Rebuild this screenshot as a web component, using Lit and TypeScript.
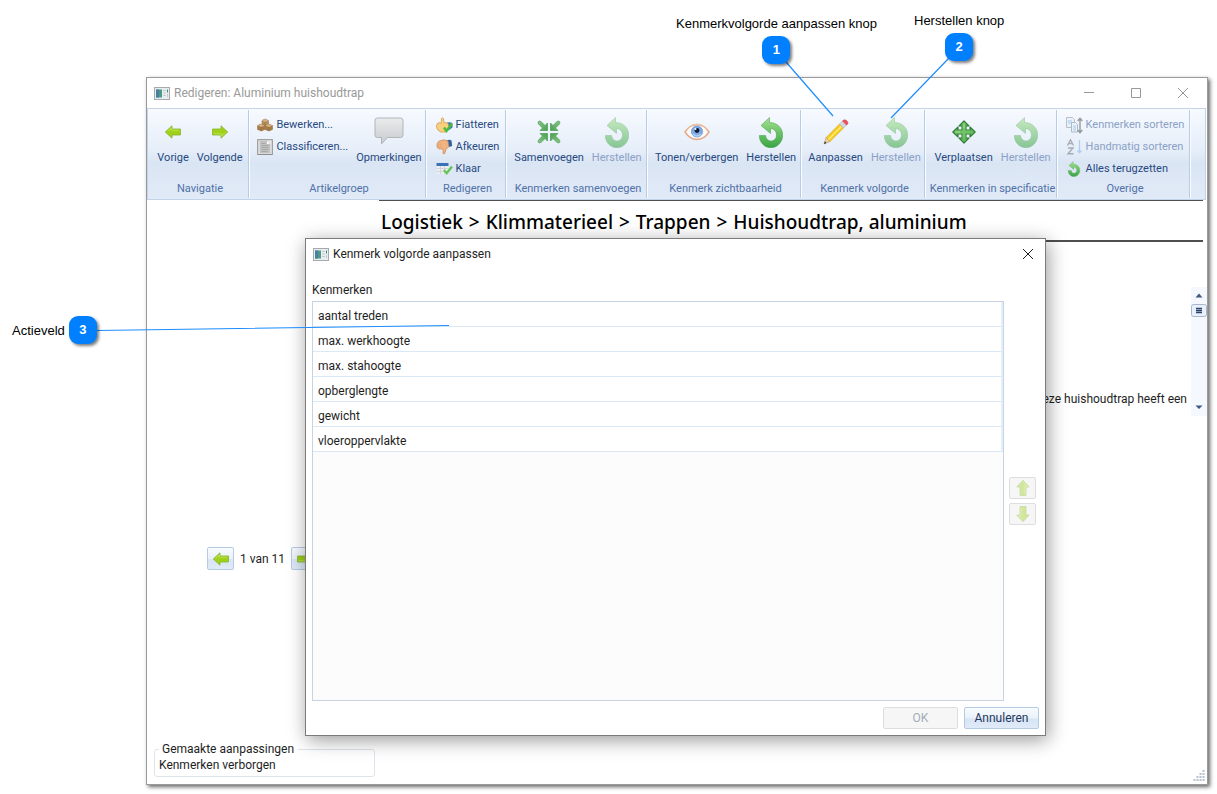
import { LitElement, html, svg, css, nothing, TemplateResult } from "lit";
import { customElement, property, state } from "lit/decorators.js";

const undoShape = svg`<path fill="url(#undo)" stroke="#3f9a45" stroke-width=".5"
  d="M10.500 .500 2 8.500l9.500 8V11.500C15 11.500 17.500 14.500 17.500 18S15 24 12 24 7 21.500 6.500 18.500H.300C.300 25.500 5.500 30.700 12 30.700S23.700 25 23.700 18 18 5.500 10.500 5.500Z"/>`;

const undoDefs = svg`<defs><linearGradient id="undo" x1="0" y1="0" x2="0" y2="1">
  <stop offset="0" stop-color="#a5e08f"/><stop offset=".5" stop-color="#6cc368"/><stop offset="1" stop-color="#3ba446"/>
</linearGradient></defs>`;

const arrow = (angle: number) => svg`<g transform="rotate(${angle} 8 8)">
  <path d="M.3 8 7 1.800V5h8.500v6H7v3.200z" fill="#9fd01a" stroke="#86b52c" stroke-width=".8" stroke-linejoin="round"/>
  <path d="M2.500 7.500 6.300 4V6.200h8" fill="none" stroke="#c3e860" stroke-width=".8"/></g>`;

const inward = (angle: number) => svg`<path transform="rotate(${angle} 12 12)" fill="url(#grn)" stroke="#3c8f45" stroke-width=".6"
  d="M10.500 10.500V3L8 5.500 4.200 1.700Q2.500.5 1.500 1.500T1.700 4.200L5.500 8 3 10.500z"/>`;

const outward = (angle: number) => svg`<path transform="rotate(${angle} 12 12)"
  d="M12 .8 17 6h-3v4h-4V6H7z"/>`;

const icons: Record<string, TemplateResult> = {
  left: html`<svg width="16" height="16" viewBox="0 0 16 16">${arrow(0)}</svg>`,
  right: html`<svg width="16" height="16" viewBox="0 0 16 16">${arrow(180)}</svg>`,
  up: html`<svg width="16" height="16" viewBox="0 0 16 16">${arrow(90)}</svg>`,
  down: html`<svg width="16" height="16" viewBox="0 0 16 16">${arrow(270)}</svg>`,
  undo: html`<svg width="24" height="31" viewBox="0 0 24 31">${undoDefs}${undoShape}</svg>`,
  undoSmall: html`<svg width="16" height="16" viewBox="-4 0 32 31">${undoDefs}${undoShape}</svg>`,
  boxes: html`<svg width="16" height="16" viewBox="0 0 16 16">
    <g stroke="#8d6a40" stroke-width=".5">
      <path d="M5 3.500 8 2l3.500 1.500v4L8 9 5 7.500z" fill="#b78f5c"/>
      <path d="M.5 8.500 4 7l3.800 1.500v4L4.300 14 .5 12.500z" fill="#a87c48"/>
      <path d="M8 8.500 11.500 7l4 1.500v4L12 14l-4-1.500z" fill="#a87c48"/>
    </g>
    <path d="M5 3.500 8 2l3.500 1.500L8 5zM.5 8.500 4 7l3.800 1.500-3.500 1.500zM8 8.500 11.500 7l4 1.500L12 10z" fill="#d3b185"/>
    <path d="M8 5v4M4.300 10v4M12 10v4" stroke="#96703f" stroke-width=".8"/></svg>`,
  doc: html`<svg width="16" height="16" viewBox="0 0 16 16">
    <rect x=".7" y=".7" width="14.600" height="14.800" fill="#e8e8e8" stroke="#8d8d8d"/>
    <path d="M3 2h7l3 3v9H3z" fill="#c4c4c4" stroke="#b4b4b4" stroke-width=".5"/>
    <path d="M4.500 4.500h4M4.500 6.500h7M4.500 8.500h7M4.500 10.500h7M4.500 12.500h6" stroke="#a2a2a2" stroke-width=".9"/>
    <path d="M10 2v3h3z" fill="#fff"/></svg>`,
  comment: html`<svg width="32" height="30" viewBox="0 0 32 30">
    <defs><linearGradient id="cmt" x1="0" y1="0" x2="0" y2="1"><stop offset="0" stop-color="#e9ebec"/><stop offset="1" stop-color="#c8cbcd"/></linearGradient></defs>
    <path d="M4.500 1h23q2.500 0 2.500 2.500v14.500q0 2.500-2.500 2.500H14.500L8.500 27V20.500H4.500Q2 20.500 2 18V3.500Q2 1 4.500 1z" fill="url(#cmt)" stroke="#b2b5b7" stroke-width="1"/></svg>`,
  thumbUp: html`<svg width="17" height="16" viewBox="0 0 17 16">
    <path d="M11 5.500q4-1 5.500 1v4l-4 3z" fill="#3c77b9"/>
    <path d="M5 6.500 5.500 1.500Q6.500 0 7.500 1.500L8 5.500l4 .5 1 5-3 4H4.500Q.5 13 .5 9.500T3 5.500z" fill="#f8d080" stroke="#cf934a" stroke-width=".7"/>
    <path d="m8 10.500 2.500 3.500L16 6.500" fill="none" stroke="#49bd3c" stroke-width="2.400"/></svg>`,
  thumbDown: html`<svg width="17" height="16" viewBox="0 0 17 16">
    <path d="M10.500 1.500q3-1.500 5 0l.7 5.500-3 1z" fill="#2f64a3"/>
    <path d="M3 2 8 .8l4 1.200.8 6-2.800 2-1 4q-1.200 1.800-2 .5L7 10H3Q.8 9 .8 6.500T3 2z" fill="#f0b482" stroke="#cd8750" stroke-width=".7"/>
    <path d="M1.500 5h4M1.700 7.500h4" stroke="#d79763" stroke-width=".6"/></svg>`,
  ready: html`<svg width="17" height="14" viewBox="0 0 17 14">
    <rect x=".5" y="1" width="12" height="11" fill="#eceef1"/>
    <path d="M.5 6.500h12M.5 9.500h12M4.500 4v8M8.500 4v8" stroke="#cbd0d7" stroke-width=".8"/>
    <rect x=".5" y="1" width="12" height="3" fill="#3973b5"/>
    <path d="m8 8 2.700 3.200L16 4.500" fill="none" stroke="#62c657" stroke-width="2.400"/></svg>`,
  merge: html`<svg width="24" height="24" viewBox="0 0 24 24">
    <defs><linearGradient id="grn" x1="0" y1="0" x2="1" y2="1"><stop offset="0" stop-color="#8acb86"/><stop offset="1" stop-color="#48a04f"/></linearGradient></defs>
    ${[0, 90, 180, 270].map(inward)}</svg>`,
  eye: html`<svg width="26" height="18" viewBox="0 0 26 18">
    <path d="M1 9Q6 1.500 13 1.500T25 9q-5 7.500-12 7.500T1 9z" fill="#fdfaf8" stroke="#e2a987" stroke-width="1.400"/>
    <path d="M3 6.500Q7 1.200 13 1.200T23 6.500" fill="none" stroke="#eec4a9" stroke-width="1"/>
    <circle cx="13" cy="8.500" r="5.600" fill="#7fa9e2" stroke="#6c92cc" stroke-width=".7"/>
    <path d="M9 11q4 4 8 0" fill="none" stroke="#abd0f7" stroke-width="1.500"/>
    <circle cx="13" cy="7.500" r="2.400" fill="#0e1c33"/><circle cx="11.500" cy="6" r="1" fill="#fff"/></svg>`,
  pencil: html`<svg width="26" height="26" viewBox="0 0 26 26">
    <path d="m1 25 2.200-6.500 3.800 4z" fill="#efcfa0" stroke="#a98a5c" stroke-width=".5"/>
    <path d="M1 25l.9-2.700 1.600 1.700z" fill="#333"/>
    <path d="M3.200 18.500 16.500 5l4 4L7 22.500z" fill="#f6cd1d" stroke="#c9960e" stroke-width=".5"/>
    <path d="M5.500 20.500 18.500 7.300" stroke="#fdeb7c" stroke-width="1.400"/>
    <path d="m16.500 5 3-3 4 4-3 3z" fill="#d5d8dc" stroke="#9fa3a8" stroke-width=".5"/>
    <path d="m19.500 2 1-1q1.500-.8 3.300.8t1 3.200l-1.300 1z" fill="#ee5261" stroke="#cf3a4b" stroke-width=".5"/></svg>`,
  move: html`<svg width="24" height="24" viewBox="0 0 24 24">
    <g fill="#65bb5c" stroke="#2f7a38" stroke-width="1.100" stroke-linejoin="round">${[0, 90, 180, 270].map(outward)}</g>
    <path d="M10.500 6h3v4.500H18v3h-4.500V18h-3v-4.500H6v-3h4.500z" fill="#70c465"/>
    <path d="M12 3v5M3 12h5" stroke="#a9df9b" stroke-width="1"/></svg>`,
  sortCopy: html`<svg width="17" height="17" viewBox="0 0 17 17">
    <path d="M.5.5h6l2 2v8h-8z" fill="#e3edf6" stroke="#8797a8"/>
    <path d="M2 4h4M2 6h5" stroke="#6fa6da"/>
    <path d="M5.500 5.500h4l2 2v7.500h-6z" fill="#e9f2fa" stroke="#7b8b9c"/>
    <path d="M7 9h3M7 11h3M7 13h3" stroke="#6fa6da"/>
    <path d="M14 1.500v14M11.700 4 14 1.300 16.300 4M11.700 13 14 15.700 16.300 13" fill="none" stroke="#4b4f55" stroke-width="1.400"/></svg>`,
  sortAz: html`<svg width="17" height="16" viewBox="0 0 17 16">
    <path d="M1.500 6.500 4.500.8l3 5.700M2.600 4.600h3.800M2 9h5l-5 5.700h5.500" fill="none" stroke="#75797f" stroke-width="1.400"/>
    <path d="M13.500 1v12.500M11.500 11.500l2 2.300 2-2.300" fill="none" stroke="#7fb3ea" stroke-width="1.200"/></svg>`,
  app: html`<svg width="16" height="13" viewBox="0 0 16 13">
    <rect x=".5" y=".5" width="15" height="12" fill="#e9edf0" stroke="#a4aaae"/>
    <rect x="2" y="2.500" width="6" height="8" fill="#4b9a86"/>
    <path d="M2 2.500h3v8H2z" fill="#4a7fa2"/>
    <path d="M9.500 3.500h2M9.500 6h2M9.500 8.500h2" stroke="#b6bcc1"/>
    <path d="M13.500 2.500v3" stroke="#3e8f78"/><path d="M13.500 7v3" stroke="#c2c7cb"/></svg>`,
  close: html`<svg width="12" height="12" viewBox="0 0 12 12"><path d="m1 1 10 10M11 1 1 11" stroke="currentColor" stroke-width="1"/></svg>`,
  minimize: html`<svg width="12" height="12" viewBox="0 0 12 12"><path d="M1 5.500h10" stroke="currentColor"/></svg>`,
  maximize: html`<svg width="12" height="12" viewBox="0 0 12 12"><path d="M1.500 1.500h9v9h-9z" fill="none" stroke="currentColor"/></svg>`,
};

interface Command { label: string; icon: string; off?: boolean }
interface Group { title: string; small?: Command[]; large?: Command[] }

const groups: Group[] = [
  { title: "Navigatie", large: [{ label: "Vorige", icon: "left" }, { label: "Volgende", icon: "right" }] },
  {
    title: "Artikelgroep",
    small: [{ label: "Bewerken...", icon: "boxes" }, { label: "Classificeren...", icon: "doc" }],
    large: [{ label: "Opmerkingen", icon: "comment" }],
  },
  {
    title: "Redigeren",
    small: [{ label: "Fiatteren", icon: "thumbUp" }, { label: "Afkeuren", icon: "thumbDown" }, { label: "Klaar", icon: "ready" }],
  },
  { title: "Kenmerken samenvoegen", large: [{ label: "Samenvoegen", icon: "merge" }, { label: "Herstellen", icon: "undo", off: true }] },
  { title: "Kenmerk zichtbaarheid", large: [{ label: "Tonen/verbergen", icon: "eye" }, { label: "Herstellen", icon: "undo" }] },
  { title: "Kenmerk volgorde", large: [{ label: "Aanpassen", icon: "pencil" }, { label: "Herstellen", icon: "undo", off: true }] },
  { title: "Kenmerken in specificatie", large: [{ label: "Verplaatsen", icon: "move" }, { label: "Herstellen", icon: "undo", off: true }] },
  {
    title: "Overige",
    small: [
      { label: "Kenmerken sorteren", icon: "sortCopy", off: true },
      { label: "Handmatig sorteren", icon: "sortAz", off: true },
      { label: "Alles terugzetten", icon: "undoSmall" },
    ],
  },
];

const crumbs = ["Logistiek", "Klimmaterieel", "Trappen", "Huishoudtrap, aluminium"];

const base = css`
  * { box-sizing: border-box; }
  button { font: inherit; color: inherit; background: none; border: 0; padding: 0; margin: 0; }
  svg { display: block; flex: none; }
`;

@customElement("ribbon-bar")
export class RibbonBar extends LitElement {
  static styles = [base, css`
    :host { display: block; font-size: 11px; }
    .bar {
      display: grid;
      grid-template-columns: 101px 177px 80px 141px 154px 124px 132px 133px 1fr;
      height: 92px;
      margin-right: 1px;
      padding: 1px 0;
      border: 1px solid #c3d4e9;
      background: linear-gradient(#f7faff 0%, #e6eef9 45%, #dae5f4 60%, #e1eaf7 100%);
      color: #27497f;
    }
    .group {
      display: flex;
      flex-direction: column;
      padding-left: 4px;
      border-right: 1px solid #b9cce4;
      box-shadow: 1px 0 #f8fbff;
      white-space: nowrap;
      min-width: 0;
    }
    .commands { flex: 1; display: flex; justify-content: center; gap: 8px; }
    .small { display: flex; flex-direction: column; padding-top: 4px; }
    .small button { display: flex; align-items: center; gap: 3px; height: 22px; }
    .small .icon { width: 17px; display: flex; justify-content: center; }
    .large { display: flex; flex-direction: column; align-items: center; padding-top: 5px; }
    .large .icon { height: 34px; display: flex; align-items: center; }
    .large .label { line-height: 18px; }
    .title { text-align: center; line-height: 18px; color: #4f71a8; }
    button:disabled { color: #8ba1c6; }
    button:disabled .icon { opacity: .55; }
  `];

  private command(c: Command, kind: string) {
    const inner = html`<span class="icon">${icons[c.icon]}</span><span class="label">${c.label}</span>`;
    return kind === "large"
      ? html`<button class="large" ?disabled=${!!c.off}>${inner}</button>`
      : html`<button ?disabled=${!!c.off}>${inner}</button>`;
  }

  render() {
    return html`<div class="bar" role="toolbar">
      ${groups.map((g) => html`<section class="group">
        <div class="commands">
          ${g.small ? html`<div class="small">${g.small.map((c) => this.command(c, "small"))}</div>` : nothing}
          ${g.large ? g.large.map((c) => this.command(c, "large")) : nothing}
        </div>
        <div class="title">${g.title}</div>
      </section>`)}
    </div>`;
  }
}

@customElement("order-dialog")
export class OrderDialog extends LitElement {
  @property({ type: Array }) items: string[] = [];

  static styles = [base, css`
    :host {
      display: flex;
      flex-direction: column;
      background: #fff;
      border: 1px solid #7b7b7b;
      box-shadow: 2px 4px 18px rgba(0, 0, 0, .4);
      color: #1e1e1e;
    }
    .titlebar { display: flex; align-items: center; gap: 4px; height: 30px; padding: 0 11px 0 7px; }
    .titlebar h2 { flex: 1; margin: 0; font-size: inherit; font-weight: 400; line-height: 18px; }
    .content {
      flex: 1;
      display: grid;
      grid-template-columns: 1fr 27px;
      grid-template-rows: 18px 1fr;
      column-gap: 5px;
      row-gap: 2px;
      padding: 12px 9px 0 6px;
    }
    .caption { line-height: 18px; grid-column: 1 / 3; }
    .list { margin: 0; padding: 0; list-style: none; border: 1px solid #c5d3e3; background: #fcfcfc; }
    .list li {
      height: 25px;
      padding: 0 5px;
      line-height: 28px;
      background: #fff;
      border-bottom: 1px solid #dbe8f5;
      border-right: 2px solid #e6eff9;
    }
    .movers { display: flex; flex-direction: column; justify-content: center; gap: 4px; }
    .movers button, .actions button {
      display: flex;
      align-items: center;
      justify-content: center;
      height: 22px;
      border: 1px solid #b4cbe4;
      border-radius: 2px;
      background: linear-gradient(#f8fbff 0%, #eaf1fa 50%, #d8e5f5 55%, #e0eaf8 100%);
      color: #26385c;
    }
    .movers button:disabled, .actions button:disabled { border-color: #dedede; background: #f6f6f6; color: #a3adba; }
    .movers button:disabled svg { opacity: .4; }
    .actions { display: flex; justify-content: flex-end; gap: 6px; padding: 6px 6px 6px 5px; }
    .actions button { width: 75px; }
  `];

  render() {
    return html`
      <header class="titlebar">${icons.app}<h2>Kenmerk volgorde aanpassen</h2>
        <button aria-label="Sluiten">${icons.close}</button></header>
      <div class="content">
        <div class="caption" id="caption">Kenmerken</div>
        <ul class="list" aria-labelledby="caption">${this.items.map((i) => html`<li>${i}</li>`)}</ul>
        <div class="movers">
          <button disabled aria-label="Omhoog">${icons.up}</button>
          <button disabled aria-label="Omlaag">${icons.down}</button>
        </div>
      </div>
      <footer class="actions"><button disabled>OK</button><button>Annuleren</button></footer>`;
  }
}

@customElement("app-root")
export class AppRoot extends LitElement {
  @state() private items = ["aantal treden", "max. werkhoogte", "max. stahoogte", "opberglengte", "gewicht", "vloeroppervlakte"];

  static styles = [base, css`
    :host {
      display: grid;
      position: relative;
      min-height: 100vh;
      box-sizing: border-box;
      padding: 77px 9px 9px 146px;
      background: #fff;
      font: 12px/16px Roboto, "Noto Sans", sans-serif;
      color: #1e1e1e;
      overflow: hidden;
    }
    .window {
      position: relative;
      display: flex;
      flex-direction: column;
      background: #fff;
      border: 1px solid #9a9a9a;
      box-shadow: 2px 2px 4px rgba(0, 0, 0, .6);
    }
    .titlebar { display: flex; align-items: center; gap: 4px; height: 30px; padding: 0 18px 0 7px; color: #999; }
    .titlebar h1 { flex: 1; margin: 0; font-size: inherit; font-weight: 400; }
    .controls { display: flex; gap: 35px; }
    .body { flex: 1; display: grid; grid-template-columns: 232px 1fr; }
    .side { display: flex; flex-direction: column; justify-content: space-between; padding: 347px 4px 7px 7px; }
    .pager { display: flex; align-items: center; gap: 6px; padding-left: 53px; white-space: nowrap; }
    .pager button {
      display: flex;
      align-items: center;
      justify-content: center;
      width: 27px;
      height: 23px;
      border: 1px solid #b4cbe4;
      border-radius: 2px;
      background: linear-gradient(#f8fbff 0%, #eaf1fa 50%, #d8e5f5 55%, #e0eaf8 100%);
    }
    fieldset { margin: 0; padding: 0 4px 3px; border: 1px solid #dde5ec; border-radius: 3px; line-height: 16px; min-width: 0; }
    legend { padding: 0 4px 0 3px; line-height: 16px; }
    .main { display: flex; flex-direction: column; }
    .crumbs {
      margin: 0 4px 0 0;
      padding: 0 2px;
      border: solid #4f4f4f;
      border-width: 1px 0 2px;
      font-family: "Noto Sans", "Open Sans", sans-serif;
      font-size: 19px;
      font-weight: 500;
      line-height: 42px;
      height: 42px;
      color: #000;
      white-space: nowrap;
    }
    .sep { padding: 0 1px; }
    .details { display: flex; justify-content: flex-end; margin-top: 45px; gap: 4px; height: 129px; }
    .details p { margin: 0; align-self: flex-end; padding-bottom: 9px; white-space: nowrap; }
    .scroll { width: 16px; background: #f5f8fe; }
    .order { position: absolute; left: 158px; right: 161px; top: 160px; bottom: 48px; }
    .grip { position: absolute; right: 2px; bottom: 2px; }
    .note { position: absolute; display: flex; align-items: center; gap: 4px; font: 13px/17px "Liberation Sans", Arial, sans-serif; color: #000; white-space: nowrap; }
    .note.stacked { flex-direction: column; }
    .badge {
      width: 28px;
      height: 28px;
      border-radius: 9px;
      background: #0080ff;
      color: #fff;
      font-weight: 700;
      line-height: 28px;
      text-align: center;
      box-shadow: 2px 2px 3px rgba(0, 0, 0, .5);
    }
    .one { left: 676px; top: 15px; }
    .two { left: 914px; top: 12px; }
    .three { left: 12px; top: 316px; }
    .lines { position: absolute; left: 0; top: 0; pointer-events: none; }
  `];

  render() {
    return html`
      <main class="window">
        <header class="titlebar">${icons.app}<h1>Redigeren: Aluminium huishoudtrap</h1>
          <div class="controls">
            <button aria-label="Minimaliseren">${icons.minimize}</button>
            <button aria-label="Maximaliseren">${icons.maximize}</button>
            <button aria-label="Sluiten">${icons.close}</button>
          </div>
        </header>
        <ribbon-bar></ribbon-bar>
        <div class="body">
          <aside class="side">
            <div class="pager">
              <button aria-label="Vorige">${icons.left}</button><span>1 van 11</span><button aria-label="Volgende">${icons.right}</button>
            </div>
            <fieldset><legend>Gemaakte aanpassingen</legend>Kenmerken verborgen</fieldset>
          </aside>
          <section class="main">
            <h2 class="crumbs">${crumbs.map((c, i) => html`${i ? html` <span class="sep">&gt;</span> ` : nothing}${c}`)}</h2>
            <div class="details">
              <p>Deze huishoudtrap heeft een</p>
              <svg class="scroll" width="16" height="129" viewBox="0 0 16 129">
                <path d="M4.500 10.500 8 6.500l3.500 4zM4.500 118.500l3.500 3.500 3.500-3.500z" fill="#41587f"/>
                <rect x=".5" y="17.500" width="15" height="12" rx="2" fill="#e9f0fa" stroke="#a7b7cf"/>
                <path d="M5 21.500h6M5 23.500h6M5 25.500h6" stroke="#2c4470" stroke-width="1.300"/>
              </svg>
            </div>
          </section>
        </div>
        <svg class="grip" width="12" height="12" viewBox="0 0 12 12">
          <path d="M10.500 0v12M7.500 3v9M4.500 6v6M1.500 9v3" stroke="#b9c2d2" stroke-width="2" stroke-dasharray="2 1"/>
        </svg>
        <order-dialog class="order" role="dialog" .items=${this.items}></order-dialog>
      </main>
      <svg class="lines" width="1000" height="400" viewBox="0 0 1000 400">
        <path d="M786 62 833 116M950 57 891 118M97 330.500 449 325.500" fill="none" stroke="#1e8cff" stroke-width="1.200"/>
      </svg>
      <div class="note stacked one"><span>Kenmerkvolgorde aanpassen knop</span><span class="badge">1</span></div>
      <div class="note stacked two"><span>Herstellen knop</span><span class="badge">2</span></div>
      <div class="note three"><span>Actieveld</span><span class="badge">3</span></div>`;
  }
}
